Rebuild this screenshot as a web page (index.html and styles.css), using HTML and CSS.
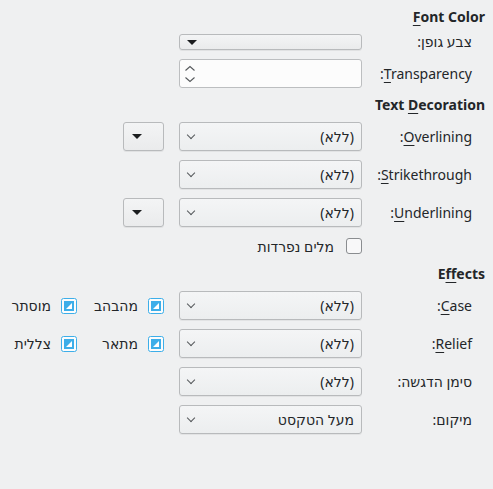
FILE: index.html
```html
<!DOCTYPE html>
<html lang="he" dir="rtl">
<head>
<meta charset="utf-8">
<link rel="stylesheet" href="styles.css">
</head>
<body>
<div class="dialog">
  <div class="heading"><u>F</u>ont Color</div>
  <div class="grid g-color">
    <div class="lbl">צבע גופן:</div>
    <div class="colorbtn thin"><span class="tri"></span></div>
    <div class="lbl"><u>T</u>ransparency:</div>
    <div class="spin">
      <svg width="12" height="18" viewBox="0 0 12 18"><path d="M1.5 5.5 L6 1.5 L10.5 5.5" fill="none" stroke="#55585b" stroke-width="1.1"/><path d="M1.5 12.5 L6 16.5 L10.5 12.5" fill="none" stroke="#55585b" stroke-width="1.1"/></svg>
    </div>
  </div>

  <div class="heading h2">Text <u>D</u>ecoration</div>
  <div class="grid g-deco">
    <div class="lbl"><u>O</u>verlining:</div>
    <div class="combo"><span class="val">(ללא)</span><span class="chev"></span></div>
    <div class="colorbtn small"><span class="tri"></span></div>

    <div class="lbl"><u>S</u>trikethrough:</div>
    <div class="combo"><span class="val">(ללא)</span><span class="chev"></span></div>
    <div></div>

    <div class="lbl"><u>U</u>nderlining:</div>
    <div class="combo"><span class="val">(ללא)</span><span class="chev"></span></div>
    <div class="colorbtn small"><span class="tri"></span></div>

    <div></div>
    <div class="check-row"><span class="box"></span><span>מלים נפרדות</span></div>
    <div></div>
  </div>

  <div class="heading h3">E<u>f</u>fects</div>
  <div class="grid g-eff">
    <div class="lbl"><u>C</u>ase:</div>
    <div class="combo"><span class="val">(ללא)</span><span class="chev"></span></div>
    <div class="checks">
      <div class="chk"><span class="tbox"><svg width="16" height="16" viewBox="0 0 16 16"><rect x="0.5" y="0.5" width="15" height="15" rx="2" fill="#fcfcfc" stroke="#3daee9"/><rect x="3" y="3" width="10" height="10" fill="#3daee9"/><path d="M5 11 H11 V5 Z" fill="#ffffff"/></svg></span><span>מהבהב</span></div>
      <div class="chk"><span class="tbox"><svg width="16" height="16" viewBox="0 0 16 16"><rect x="0.5" y="0.5" width="15" height="15" rx="2" fill="#fcfcfc" stroke="#3daee9"/><rect x="3" y="3" width="10" height="10" fill="#3daee9"/><path d="M5 11 H11 V5 Z" fill="#ffffff"/></svg></span><span>מוסתר</span></div>
    </div>

    <div class="lbl"><u>R</u>elief:</div>
    <div class="combo"><span class="val">(ללא)</span><span class="chev"></span></div>
    <div class="checks">
      <div class="chk"><span class="tbox"><svg width="16" height="16" viewBox="0 0 16 16"><rect x="0.5" y="0.5" width="15" height="15" rx="2" fill="#fcfcfc" stroke="#3daee9"/><rect x="3" y="3" width="10" height="10" fill="#3daee9"/><path d="M5 11 H11 V5 Z" fill="#ffffff"/></svg></span><span>מתאר</span></div>
      <div class="chk"><span class="tbox"><svg width="16" height="16" viewBox="0 0 16 16"><rect x="0.5" y="0.5" width="15" height="15" rx="2" fill="#fcfcfc" stroke="#3daee9"/><rect x="3" y="3" width="10" height="10" fill="#3daee9"/><path d="M5 11 H11 V5 Z" fill="#ffffff"/></svg></span><span>צללית</span></div>
    </div>

    <div class="lbl">סימן הדגשה:</div>
    <div class="combo"><span class="val">(ללא)</span><span class="chev"></span></div>
    <div></div>

    <div class="lbl">מיקום:</div>
    <div class="combo"><span class="val">מעל הטקסט</span><span class="chev"></span></div>
    <div></div>
  </div>
</div>
</body>
</html>
```

FILE: styles.css
```css
html, body {
  margin: 0;
  padding: 0;
  background: #eff0f1;
}
body {
  width: 493px;
  height: 489px;
  overflow: hidden;
  font-family: "Noto Sans", "DejaVu Sans", sans-serif;
  font-size: 14px;
  color: #232629;
  direction: rtl;
}
u {
  text-decoration: underline;
  text-decoration-thickness: 1px;
  text-underline-offset: 3px;
}
.dialog {
  padding: 7px 8px 0 0;
}
.heading {
  height: 20px;
  line-height: 20px;
  font-weight: bold;
}
.h2 { margin-top: 7px; }
.h3 { margin-top: 8px; }
.grid {
  display: grid;
  grid-template-columns: 110px 183px 15px 1fr;
  margin-right: 13px;
  margin-top: 7px;
  row-gap: 9px;
  align-items: center;
}
.g-color {
  grid-template-columns: 110px 183px;
  grid-template-rows: 16px 29px;
}
.g-deco {
  grid-template-rows: 29px 29px 29px 20px;
}
.g-deco > :nth-child(3n) { grid-column: 4; }
.g-eff {
  grid-template-rows: 29px 29px 29px 29px;
}
.g-eff > :nth-child(3n) { grid-column: 4; }
.lbl {
  text-align: right;
  white-space: nowrap;
  line-height: 20px;
}
.colorbtn {
  box-sizing: border-box;
  border: 1px solid #b8babc;
  border-radius: 3px;
  background: linear-gradient(#f3f4f5, #eaebec);
  box-shadow: 0 1px 0 rgba(0,0,0,0.06);
  display: flex;
  align-items: center;
  direction: ltr;
}
.colorbtn.thin {
  height: 16px;
  padding-left: 7px;
}
.colorbtn.small {
  width: 41px;
  height: 29px;
  padding-left: 8px;
}
.tri {
  width: 0;
  height: 0;
  border-left: 5px solid transparent;
  border-right: 5px solid transparent;
  border-top: 5px solid #1b1d1f;
}
.spin {
  box-sizing: border-box;
  height: 29px;
  border: 1px solid #bcbec0;
  border-radius: 3px;
  background: #fcfcfc;
  display: flex;
  align-items: center;
  direction: ltr;
  padding-left: 4px;
}
.combo {
  box-sizing: border-box;
  height: 29px;
  border: 1px solid #b8babc;
  border-radius: 3px;
  background: linear-gradient(#f4f5f6, #eceeef);
  box-shadow: 0 1px 0 rgba(0,0,0,0.05);
  display: flex;
  align-items: center;
  justify-content: space-between;
  padding: 0 7px 0 8px;
}
.val {
  white-space: nowrap;
}
.chev {
  width: 5px;
  height: 5px;
  border-right: 1.2px solid #55585b;
  border-bottom: 1.2px solid #55585b;
  transform: translateY(-2px) rotate(45deg);
}
.check-row {
  display: flex;
  align-items: center;
  gap: 12px;
}
.box {
  box-sizing: border-box;
  width: 16px;
  height: 16px;
  border: 1px solid #8a8d90;
  border-radius: 3px;
  background: #f8f8f9;
}
.checks {
  display: flex;
  align-items: center;
}
.chk {
  display: flex;
  align-items: center;
  gap: 10px;
}
.chk:first-child {
  width: 87px;
}
.tbox {
  display: flex;
  width: 16px;
  height: 16px;
}
```
